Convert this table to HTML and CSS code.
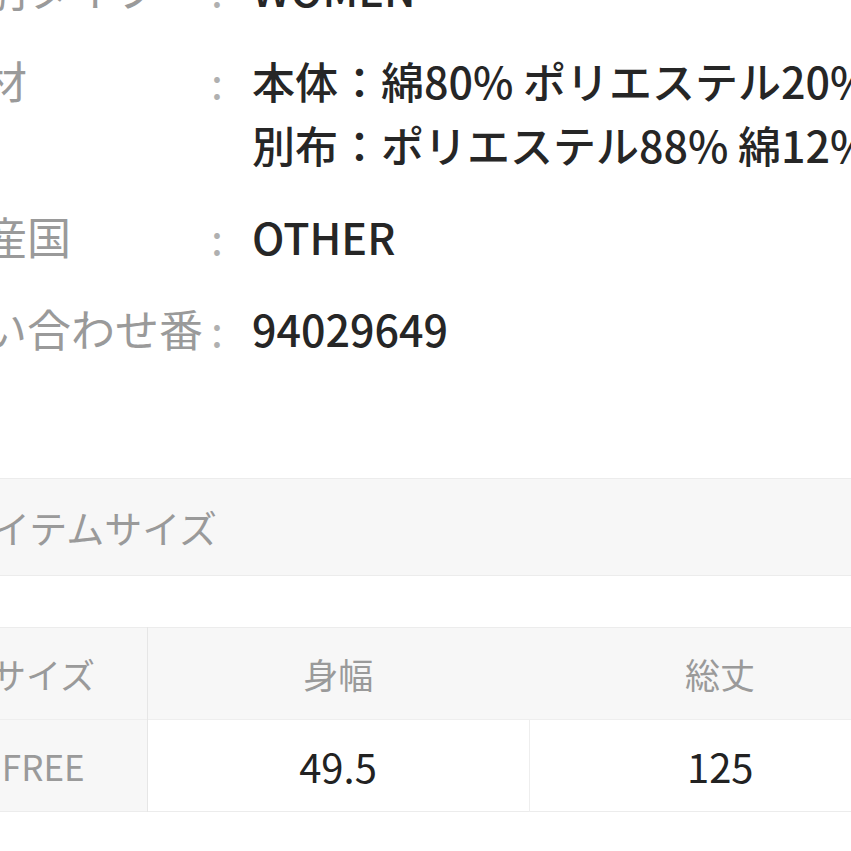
FILE: index.html
```html
<!DOCTYPE html>
<html lang="ja">
<head>
  <meta charset="UTF-8" />
  <meta name="viewport" content="width=device-width, initial-scale=1.0" />
  <title>商品詳細</title>
  <link rel="stylesheet" href="styles.css">
</head>
<body>
  <div class="page">
    <dl class="spec">
      <div class="spec-row">
        <dt>性別タイプ</dt>
        <span class="colon">:</span>
        <dd>WOMEN</dd>
      </div>
      <div class="spec-row">
        <dt>素材</dt>
        <span class="colon">:</span>
        <dd>本体：綿80% ポリエステル20%<br>別布：ポリエステル88% 綿12%</dd>
      </div>
      <div class="spec-row">
        <dt>原産国</dt>
        <span class="colon">:</span>
        <dd>OTHER</dd>
      </div>
      <div class="spec-row">
        <dt>問い合わせ番号</dt>
        <span class="colon">:</span>
        <dd>94029649</dd>
      </div>
    </dl>

    <section class="size">
      <h2 class="size-title">アイテムサイズ</h2>
      <table class="size-table">
        <thead>
          <tr>
            <th class="size-name">サイズ</th>
            <th>身幅</th>
            <th>総丈</th>
          </tr>
        </thead>
        <tbody>
          <tr>
            <td class="size-name">FREE</td>
            <td>49.5</td>
            <td>125</td>
          </tr>
        </tbody>
      </table>
    </section>
  </div>
</body>
</html>
```

FILE: styles.css
```css
body {
  margin: 0;
  padding: 0;
  background: #fff;
  font-family: "Noto Sans CJK JP", "Noto Sans", sans-serif;
  overflow: hidden;
}

/* the page is shown zoomed in, so the content runs past both edges */
.page {
  width: 972px;
  margin: -58px 0 0 -61px;
}

.spec {
  margin: 0;
}

.spec-row {
  display: flex;
  padding: 14px 0;
  font-size: 43px;
  line-height: 64px;
}

/* long labels are cut to one line, like the original page */
.spec-row dt {
  width: 264px;
  height: 64px;
  flex-shrink: 0;
  overflow: hidden;
  word-break: break-all;
  color: #9a9a9a;
  font-size: 44px;
}

.colon {
  width: 49px;
  flex-shrink: 0;
  padding-left: 8px;
  box-sizing: border-box;
  color: #b0b0b0;
}

.spec-row dd {
  margin: 0;
  color: #262626;
  font-family: "Noto Sans CJK JP Medium", "Noto Sans CJK JP", sans-serif;
  font-weight: 500;
  white-space: nowrap;
}

.size {
  margin-top: 104px;
}

.size-title {
  margin: 0;
  height: 96px;
  padding-left: 17px;
  background: #f7f7f7;
  border-top: 1px solid #ececec;
  border-bottom: 1px solid #ececec;
  color: #9a9a9a;
  font-size: 38px;
  font-weight: 400;
  line-height: 96px;
  white-space: nowrap;
}

.size-table {
  width: 100%;
  margin-top: 51px;
  border-collapse: collapse;
  table-layout: fixed;
  border-top: 1px solid #ececec;
  border-bottom: 1px solid #ececec;
}

.size-table th,
.size-table td {
  height: 91px;
  padding: 0;
  text-align: center;
  white-space: nowrap;
}

.size-table th {
  background: #f7f7f7;
  color: #9a9a9a;
  font-size: 35px;
  font-weight: 400;
}

.size-table td {
  border-top: 1px solid #eeeeee;
  border-left: 1px solid #eeeeee;
  color: #222;
  font-size: 40px;
}

.size-table .size-name {
  width: 207px;
  background: #f7f7f7;
  border-right: 1px solid #e6e6e6;
  color: #9a9a9a;
  font-size: 35px;
}
```
